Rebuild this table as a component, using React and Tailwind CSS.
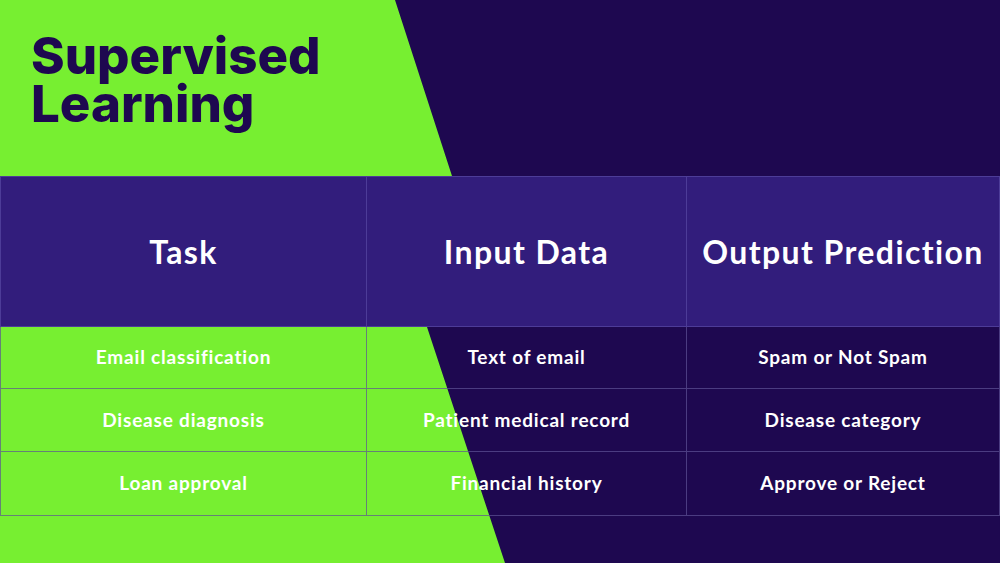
import React from "react";

const rows = [
  ["Email classification", "Text of email", "Spam or Not Spam"],
  ["Disease diagnosis", "Patient medical record", "Disease category"],
  ["Loan approval", "Financial history", "Approve or Reject"],
];

export default function App() {
  return (
    <div className="relative w-[1000px] h-[563px] overflow-hidden bg-[#1e0850]">
      <div className="absolute inset-0 bg-[#77ef31] [clip-path:polygon(0_0,395px_0,452px_176px,427px_327px,505px_563px,0_563px)]" />
      <div className="relative flex flex-col">
        <div className="h-[176px] pl-[31px] pt-[32px]">
          <h1 className="text-[51px] leading-[48px] font-extrabold text-[#1e0850] [font-family:Inter,'Liberation_Sans',sans-serif]">
            Supervised
            <br />
            Learning
          </h1>
        </div>
        <div className="grid grid-cols-[367px_320px_313px] [font-family:Lato,'Noto_Sans',sans-serif] font-bold text-white">
          {["Task", "Input Data", "Output Prediction"].map((h, i) => (
            <div
              key={h}
              className={`h-[151px] flex items-center justify-center bg-[#321d7c] border-t border-b border-[#4d3c98] ${i === 0 ? "border-l" : ""} border-r text-[32px] tracking-[1.4px]`}
            >
              {h}
            </div>
          ))}
          {rows.map((r, ri) =>
            r.map((c, ci) => (
              <div
                key={ri + "-" + ci}
                className={`${ri === 2 ? "h-[64px]" : ri === 1 ? "h-[63px]" : "h-[62px]"} flex items-center justify-center border-b border-r border-[#5e5296]/70 ${ci === 0 ? "border-l" : ""} text-[19px] tracking-[0.8px]`}
              >
                {c}
              </div>
            ))
          )}
        </div>
      </div>
    </div>
  );
}
